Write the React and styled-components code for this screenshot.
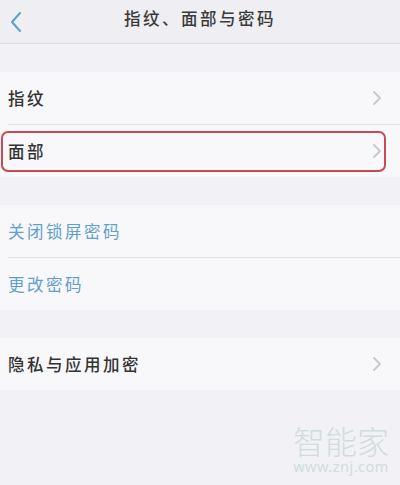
import React from "react";
import styled, { createGlobalStyle } from "styled-components";

const Global = createGlobalStyle`
  html, body { margin: 0; padding: 0; background: #f2f1f5; }
  body { font-family: "Noto Sans CJK SC", "Noto Sans", sans-serif; }
`;

const Page = styled.div`
  width: 400px;
  height: 485px;
  background: #f2f1f5;
  position: relative;
  overflow: hidden;
`;

const Header = styled.div`
  height: 43px;
  background: #efeef2;
  border-bottom: 1px solid #dcdbe0;
  display: grid;
  grid-template-columns: 40px 1fr 40px;
  align-items: center;
`;

const Back = styled.div`
  display: flex;
  align-items: center;
  justify-content: flex-start;
  padding-left: 9px;
  height: 100%;
`;

const Title = styled.div`
  text-align: center;
  font-size: 16.5px;
  letter-spacing: 2.5px;
  color: #3a3a3a;
  font-weight: 500;
  margin-top: -8px;
`;

const Group = styled.div`
  margin-top: ${(p) => p.$gap}px;
  background: #f8f7fa;
`;

const Row = styled.div`
  position: relative;
  height: ${(p) => p.$h || 52}px;
  display: flex;
  align-items: center;
  justify-content: space-between;
  padding: 0 18px 0 8px;
`;

const Label = styled.span`
  font-size: 16.5px;
  letter-spacing: 2.5px;
  color: ${(p) => (p.$blue ? "#5f9fcf" : "#333333")};
  font-weight: ${(p) => (p.$blue ? 400 : 500)};
`;

const Separator = styled.div`
  height: 1px;
  margin-left: 8px;
  background: #e4e3e8;
`;

const Highlight = styled.div`
  position: absolute;
  left: 1px;
  top: 6px;
  width: 385px;
  height: 41px;
  border: 2px solid #c94a57;
  border-radius: 7px;
  box-sizing: border-box;
  pointer-events: none;
`;

const Watermark = styled.div`
  position: absolute;
  right: 11px;
  top: 423px;
  display: flex;
  flex-direction: column;
  align-items: center;
  color: #cfdde0;
`;

const WmBig = styled.div`
  font-size: 32px;
  line-height: 34px;
  font-family: "Noto Sans CJK SC", sans-serif;
  font-weight: 300;
`;

const WmSmall = styled.div`
  margin-top: 1px;
  font-size: 14.5px;
  line-height: 17px;
  font-family: "Noto Sans", sans-serif;
  letter-spacing: 0.5px;
`;

const Chevron = () => (
  <svg width="10" height="16" viewBox="0 0 10 16">
    <path d="M2 2 L8 8 L2 14" fill="none" stroke="#c8c8cd" strokeWidth="1.8" strokeLinecap="round" strokeLinejoin="round" />
  </svg>
);

const BackIcon = () => (
  <svg width="14" height="22" viewBox="0 0 14 22">
    <path d="M11 2 L3 11 L11 20" fill="none" stroke="#5b9fd6" strokeWidth="2" strokeLinecap="round" strokeLinejoin="round" />
  </svg>
);

export default function App() {
  return (
    <>
      <Global />
      <Page>
        <Header>
          <Back><BackIcon /></Back>
          <Title>指纹、面部与密码</Title>
          <div />
        </Header>
        <Group $gap={28}>
          <Row>
            <Label>指纹</Label>
            <Chevron />
          </Row>
          <Separator />
          <Row>
            <Label>面部</Label>
            <Chevron />
            <Highlight />
          </Row>
        </Group>
        <Group $gap={28}>
          <Row>
            <Label $blue>关闭锁屏密码</Label>
          </Row>
          <Separator />
          <Row>
            <Label $blue>更改密码</Label>
          </Row>
        </Group>
        <Group $gap={28}>
          <Row>
            <Label>隐私与应用加密</Label>
            <Chevron />
          </Row>
        </Group>
        <Watermark>
          <WmBig>智能家</WmBig>
          <WmSmall>www.znj.com</WmSmall>
        </Watermark>
      </Page>
    </>
  );
}
